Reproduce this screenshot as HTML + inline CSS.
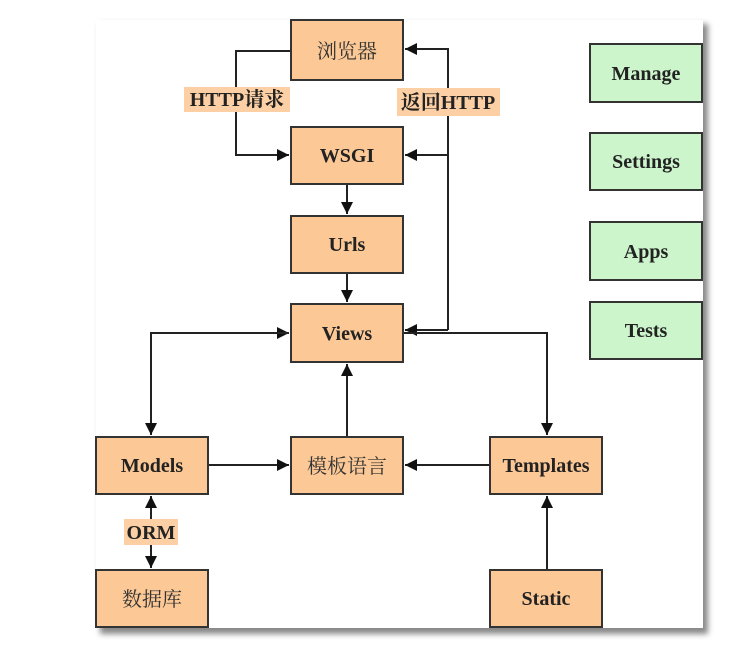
<!DOCTYPE html>
<html><head><meta charset="utf-8"><style>
html,body{margin:0;padding:0;background:#fff;width:754px;height:652px;overflow:hidden}
svg{display:block}
text{font-family:"Liberation Serif","Noto Serif CJK SC",serif;font-weight:bold;fill:#222}
.c{font-family:"Liberation Serif","Noto Serif CJK SC",serif;font-weight:normal;fill:#333}
</style></head><body>
<svg width="754" height="652" viewBox="0 0 754 652">
<defs>
<filter id="sh" x="-5%" y="-5%" width="115%" height="115%"><feGaussianBlur stdDeviation="3"/></filter>
<marker id="a" viewBox="0 0 10 10" refX="10" refY="5" markerWidth="15" markerHeight="12" markerUnits="userSpaceOnUse" orient="auto"><path d="M0,0L10,5L0,10z" fill="#111"/></marker>
</defs>
<rect x="100" y="24" width="608" height="610" fill="#888" filter="url(#sh)"/>
<rect x="96" y="20" width="607" height="608" fill="#fff"/>
<g stroke="#222" stroke-width="2" fill="none">
<polyline points="291,51 236,51 236,155 289,155" marker-end="url(#a)"/>
<line x1="448" y1="330" x2="405" y2="330" marker-end="url(#a)"/>
<polyline points="448,330 448,49 405,49" marker-end="url(#a)"/>
<line x1="448" y1="155" x2="405" y2="155" marker-end="url(#a)"/>
<line x1="347" y1="184" x2="347" y2="214" marker-end="url(#a)"/>
<line x1="347" y1="273" x2="347" y2="302" marker-end="url(#a)"/>
<polyline points="151,333 289,333" marker-end="url(#a)"/>
<polyline points="289,333 151,333 151,435" marker-end="url(#a)"/>
<polyline points="403,333 547,333 547,435" marker-end="url(#a)"/>
<line x1="347" y1="437" x2="347" y2="364" marker-end="url(#a)"/>
<line x1="208" y1="465" x2="289" y2="465" marker-end="url(#a)"/>
<line x1="490" y1="465" x2="405" y2="465" marker-end="url(#a)"/>
<line x1="547" y1="570" x2="547" y2="496" marker-end="url(#a)"/>
<line x1="151" y1="530" x2="151" y2="496" marker-end="url(#a)"/>
<line x1="151" y1="530" x2="151" y2="568" marker-end="url(#a)"/>
</g>
<g fill="#fcc896" stroke="#333" stroke-width="2">
<rect x="291" y="20" width="112" height="60"/>
<rect x="291" y="127" width="112" height="57"/>
<rect x="291" y="216" width="112" height="57"/>
<rect x="291" y="304" width="112" height="58"/>
<rect x="96" y="437" width="112" height="57"/>
<rect x="291" y="437" width="112" height="57"/>
<rect x="490" y="437" width="112" height="57"/>
<rect x="96" y="570" width="112" height="57"/>
<rect x="490" y="570" width="112" height="57"/>
</g>
<g fill="#ccf5cc" stroke="#333" stroke-width="2">
<rect x="590" y="44" width="112" height="58"/>
<rect x="590" y="133" width="112" height="57"/>
<rect x="590" y="222" width="112" height="58"/>
<rect x="590" y="302" width="112" height="57"/>
</g>
<g fill="#fcd0a4">
<rect x="184" y="87" width="106" height="25"/>
<rect x="397" y="88" width="103" height="28"/>
<rect x="124" y="519" width="54" height="26"/>
</g>
<g font-size="20" text-anchor="middle">
<text class="c" x="347" y="58">浏览器</text>
<text x="347" y="162">WSGI</text>
<text x="347" y="251">Urls</text>
<text x="347" y="340">Views</text>
<text x="152" y="472">Models</text>
<text class="c" x="347" y="473">模板语言</text>
<text x="546" y="472">Templates</text>
<text class="c" x="152" y="606">数据库</text>
<text x="546" y="605">Static</text>
<text x="646" y="80">Manage</text>
<text x="646" y="168">Settings</text>
<text x="646" y="258">Apps</text>
<text x="646" y="337">Tests</text>
<text x="237" y="106">HTTP请求</text>
<text x="448" y="109">返回HTTP</text>
<text x="151" y="539">ORM</text>
</g>
</svg>
</body></html>
